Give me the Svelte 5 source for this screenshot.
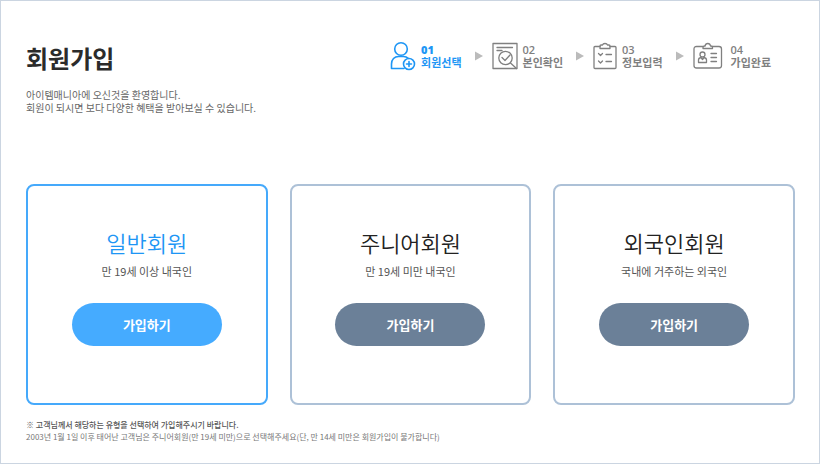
<script>
  const steps = [
    { no: '01', label: '회원선택', icon: 'user' },
    { no: '02', label: '본인확인', icon: 'verify' },
    { no: '03', label: '정보입력', icon: 'form' },
    { no: '04', label: '가입완료', icon: 'card' }
  ];
  const types = [
    { title: '일반회원', desc: '만 19세 이상 내국인' },
    { title: '주니어회원', desc: '만 19세 미만 내국인' },
    { title: '외국인회원', desc: '국내에 거주하는 외국인' }
  ];
  let selected = $state(0);
</script>

<main class="page">
  <header>
    <div class="intro">
      <h1>회원가입</h1>
      <p>아이템매니아에 오신것을 환영합니다.<br />회원이 되시면 보다 다양한 혜택을 받아보실 수 있습니다.</p>
    </div>
    <ol class="steps">
      {#each steps as step, i}
        <li class:current={i === 0} aria-current={i === 0 ? 'step' : undefined}>
          {#if i > 0}
            <svg class="arrow" width="8" height="10" viewBox="0 0 8 10" aria-hidden="true"><path d="M0 0.500v9l8-4.500z" /></svg>
          {/if}
          {#if step.icon === 'user'}
            <svg class="icon" width="26" height="30" viewBox="0 0 26 30" aria-hidden="true">
              <circle cx="11" cy="8" r="6.3" />
              <path d="M14 27.5H1.500V23c0-4.500 3-7.500 7-7.500h5c2 0 3.500.6 4.700 1.800" />
              <circle cx="19" cy="23" r="5.500" />
              <path d="M19 20.500v5M16.500 23h5" />
            </svg>
          {:else if step.icon === 'verify'}
            <svg class="icon" width="26" height="30" viewBox="0 0 26 30" aria-hidden="true">
              <path d="M1 2.500h24v25h-24zM5 6.500h15.500M5 9.500h5" />
              <circle cx="13.500" cy="17" r="6.700" />
              <path d="M10 16.500l3 3 5-5.500M18.500 22l6 5.500" />
            </svg>
          {:else if step.icon === 'form'}
            <svg class="icon" width="24" height="30" viewBox="0 0 24 30" aria-hidden="true">
              <path d="M7 5.500H2q-1 0-1 1v20q0 1 1 1h20q1 0 1-1v-20q0-1-1-1h-5" />
              <path d="M7 7.500V5q0-1 1-1h1.500q.5-1.500 2.500-1.500T14.500 4H16q1 0 1 1v2.500z" />
              <path d="M5.500 12.500l2 2 2-2M5.500 20l2 2 2-2M13 13.500h5.500M13 20.500h5.500" />
            </svg>
          {:else}
            <svg class="icon" width="33" height="30" viewBox="0 0 33 30" aria-hidden="true">
              <path d="M10 5.500H3.500q-2.500 0-2.500 2.500v16.500q0 2.500 2.500 2.500h22.500q2.500 0 2.500-2.500V8q0-2.500-2.500-2.500h-6.500" />
              <path d="M10 7.500V6.500q0-1.500 1.500-1.500h.5q.5-2.500 2.800-2.500t2.700 2.500h.5q1.500 0 1.500 1.500v1z" />
              <circle cx="9.500" cy="13.500" r="2.500" />
              <path d="M8 16.500q-2.500.5-2.500 2.500v2.500h8V19q0-2-2.500-2.500M8 16.500l1.500 2 1.500-2M18 12.500h5.500M18 16.500h5.500M18 20.500h5.500" />
            </svg>
          {/if}
          <span class="text"><span class="no">{step.no}</span><span>{step.label}</span></span>
        </li>
      {/each}
    </ol>
  </header>

  <section class="cards" aria-label="회원 유형">
    {#each types as type, i}
      <article class:selected={selected === i}>
        <h2>{type.title}</h2>
        <p>{type.desc}</p>
        <button type="button" onclick={() => (selected = i)}>가입하기</button>
      </article>
    {/each}
  </section>

  <footer>
    <strong>※ 고객님께서 해당하는 유형을 선택하여 가입해주시기 바랍니다.</strong>
    <p>2003년 1월 1일 이후 태어난 고객님은 주니어회원(만 19세 미만)으로 선택해주세요(단, 만 14세 미만은 회원가입이 불가합니다)</p>
  </footer>
</main>

<style>
  .page {
    box-sizing: border-box;
    min-height: 100vh;
    padding: 40px 24px 16px 25px;
    border: 1px solid #cbd5e1;
    background: #fff;
    color: #555;
    font-family: 'Noto Sans CJK KR', 'Noto Sans', sans-serif;
  }
  h1, h2, p, ol { margin: 0; padding: 0; }
  header {
    display: flex;
    flex-wrap: wrap;
    justify-content: space-between;
    align-items: flex-start;
  }
  h1 {
    color: #2b2b2b;
    font-size: 24px;
    font-weight: 700;
    line-height: 34px;
  }
  .intro p {
    margin-top: 13px;
    color: #666;
    font-size: 10px;
    line-height: 13px;
  }
  .steps {
    display: flex;
    gap: 13px;
    padding-right: 24px;
    list-style: none;
    color: #808080;
  }
  li {
    display: flex;
    align-items: center;
  }
  .current { color: #1e96f5; }
  .arrow {
    margin-right: 9px;
    fill: #bbb;
  }
  .icon {
    fill: none;
    stroke: currentColor;
    stroke-width: 1.3;
    stroke-linejoin: round;
    stroke-linecap: round;
  }
  .current .icon { stroke-width: 1.6; }
  .text {
    display: flex;
    flex-direction: column;
    margin-left: 5px;
    font-size: 11px;
    font-weight: 700;
    line-height: 13px;
  }
  .no {
    font-family: 'Open Sans', sans-serif;
    font-weight: 600;
  }
  .current .no { font-weight: 800; }
  .cards {
    display: grid;
    grid-template-columns: repeat(3, 1fr);
    gap: 22px;
    margin-top: 70px;
  }
  article {
    display: flex;
    flex-direction: column;
    align-items: center;
    padding: 40px 16px 57px;
    border: 2px solid #adc1d7;
    border-radius: 8px;
  }
  h2 {
    color: #222;
    font-size: 22px;
    font-weight: 350;
    line-height: 32px;
  }
  article p {
    margin-top: 5px;
    font-size: 11px;
    line-height: 16px;
  }
  button {
    width: 150px;
    height: 43px;
    margin-top: 24px;
    padding: 0;
    border: 0;
    border-radius: 22px;
    background: #6b8098;
    color: #fff;
    font: 700 13px 'Noto Sans CJK KR', 'Noto Sans', sans-serif;
    cursor: pointer;
  }
  .selected { border-color: #45a9fb; }
  .selected h2 { color: #1e96f5; }
  .selected button { background: #45abff; }
  footer {
    margin-top: 14px;
    color: #777;
    font-size: 8px;
    line-height: 12px;
  }
  footer strong {
    display: block;
    color: #555;
    font-weight: 500;
  }
</style>
